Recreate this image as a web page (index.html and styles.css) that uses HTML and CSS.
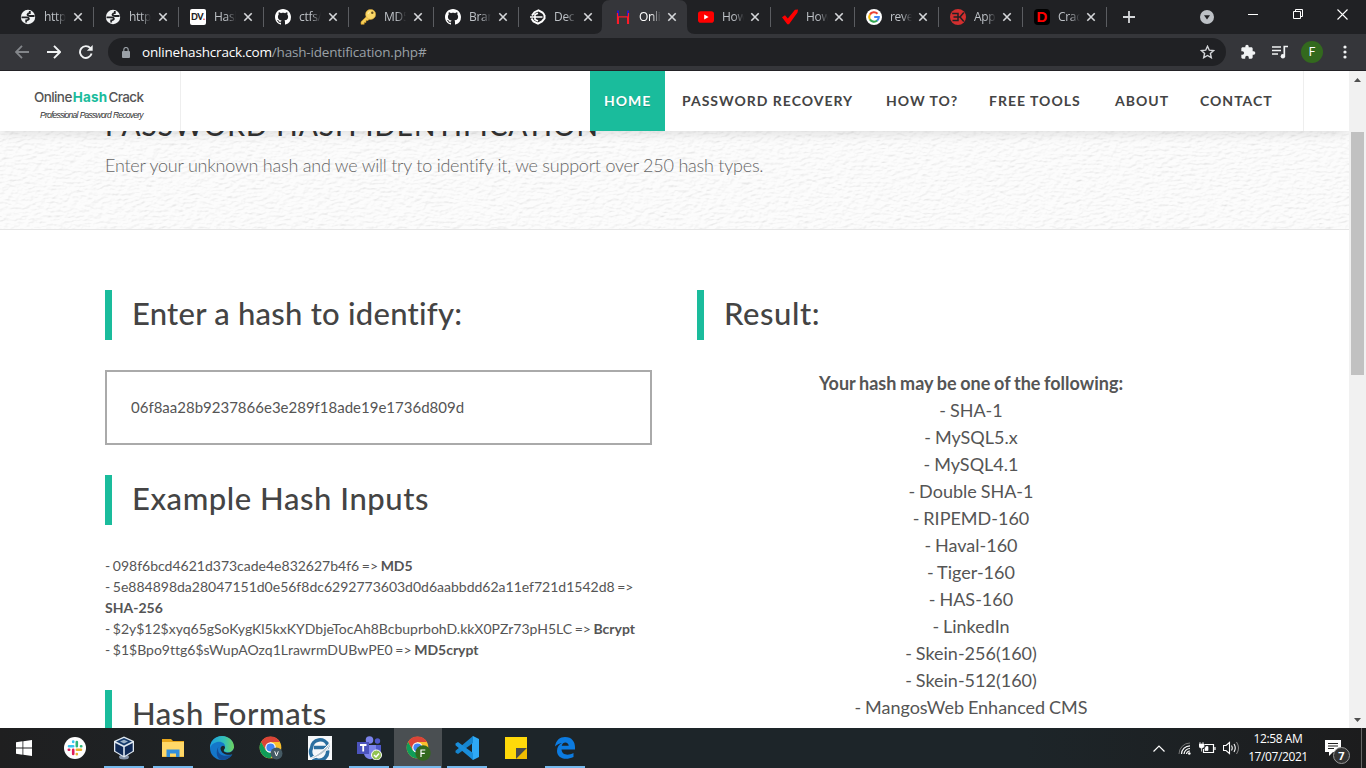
FILE: index.html
```html
<!DOCTYPE html>
<html lang="en">
<head>
<meta charset="utf-8">
<title>Online Hash Crack</title>
<link rel="stylesheet" href="styles.css">
</head>
<body>
<svg class="defs" width="0" height="0" aria-hidden="true">
  <symbol id="x" viewBox="0 0 10 10"><path d="M1.3 1.3l7.4 7.4M8.7 1.3L1.3 8.7" stroke="currentColor" stroke-width="1.6" fill="none"/></symbol>
  <symbol id="globe" viewBox="0 0 16 16"><circle cx="8" cy="8" r="7.2" fill="#f1f3f4"/><path d="M1.500 8.300H6.500Q9.300 8.500 8.800 10.200 8 11.300 6.200 11.300V13.500M14.500 7H10.500Q7.500 6.800 7.500 5.500 8 4.300 9.800 4.200V2" fill="none" stroke="#202124" stroke-width="1.8"/></symbol>
  <symbol id="github" viewBox="0 0 16 16"><path fill="#fff" d="M8 0C3.58 0 0 3.58 0 8c0 3.54 2.29 6.53 5.47 7.59.4.07.55-.17.55-.38 0-.19-.01-.82-.01-1.49-2.01.37-2.53-.49-2.69-.94-.09-.23-.48-.94-.82-1.13-.28-.15-.68-.52-.01-.53.63-.01 1.08.58 1.23.82.72 1.21 1.87.87 2.33.66.07-.52.28-.87.51-1.07-1.78-.2-3.64-.89-3.64-3.95 0-.87.31-1.59.82-2.15-.08-.2-.36-1.02.08-2.12 0 0 .67-.21 2.2.82.64-.18 1.32-.27 2-.27s1.36.09 2 .27c1.53-1.04 2.2-.82 2.2-.82.44 1.1.16 1.92.08 2.12.51.56.82 1.27.82 2.15 0 3.07-1.87 3.75-3.65 3.95.29.25.54.73.54 1.48 0 1.07-.01 1.93-.01 2.2 0 .21.15.46.55.38A8.01 8.01 0 0016 8c0-4.42-3.58-8-8-8z"/></symbol>
  <symbol id="chrome" viewBox="0 0 24 24"><circle cx="12" cy="12" r="11.3" fill="#fbc02d"/><path d="M2.2 6.3A11.3 11.3 0 0121.8 6.3H12L7 14.8z" fill="#db4437"/><path d="M2.2 6.3L7 14.8 12 17.500 15 16.500 12 23.3A11.3 11.3 0 012.2 6.3z" fill="#0f9d58"/><circle cx="12" cy="12" r="5.5" fill="#fff"/><circle cx="12" cy="12" r="4.3" fill="#4285f4"/></symbol>
</svg>

<div class="tabs">
  <div class="tab"><svg class="fav"><use href="#globe"/></svg><span>http</span><svg class="close"><use href="#x"/></svg></div>
  <div class="tab"><svg class="fav"><use href="#globe"/></svg><span>http</span><svg class="close"><use href="#x"/></svg></div>
  <div class="tab"><div class="fav dv">DV<i>.</i></div><span>Hasl</span><svg class="close"><use href="#x"/></svg></div>
  <div class="tab"><svg class="fav"><use href="#github"/></svg><span>ctfs/</span><svg class="close"><use href="#x"/></svg></div>
  <div class="tab"><svg class="fav" viewBox="0 0 16 16"><path d="M7.500 6.500L1 12.800V15.300H4.200V13.500H6V11.500H8L10 9.500z" fill="#f7cf57" stroke="#d39a26" stroke-width=".6"/><circle cx="10.600" cy="5.400" r="5" fill="#fbd868" stroke="#d9a636" stroke-width=".6"/><circle cx="12.300" cy="3.700" r="1.200" fill="#6b5320"/><path d="M8 5Q8.500 3 10 2.800" fill="none" stroke="#fff3c0"/></svg><span>MD5</span><svg class="close"><use href="#x"/></svg></div>
  <div class="tab"><svg class="fav"><use href="#github"/></svg><span>Bran</span><svg class="close"><use href="#x"/></svg></div>
  <div class="tab last-before"><svg class="fav" viewBox="0 0 16 16"><path d="M14.500 6L12.500 3.500 8.500 1.300 4.500 3.200 2 6.500" fill="none" stroke="#fff" stroke-width="2"/><path d="M1.500 9.500L3.500 12.500 8 14.700 12 12.500 14.500 9.500V6" fill="none" stroke="#fff" stroke-width="2"/><path d="M0 8H12.500M5 8V5.500L8 4.200M5 8V10.500L8 12" fill="none" stroke="#fff" stroke-width="1.600"/></svg><span>Dec</span><svg class="close"><use href="#x"/></svg></div>
  <div class="tab active"><svg class="fav" viewBox="0 0 16 16"><path d="M3 1.500V10M13 1.500V10" stroke="#2a14c8" stroke-width="2"/><path d="M3 8V15M13 8V15" stroke="#ff1a28" stroke-width="2"/><path d="M2.500 4V15M13.500 4V15M2.500 7.800H13.500" stroke="#ff1a28" stroke-width="1.200"/></svg><span>Onlin</span><svg class="close"><use href="#x"/></svg></div>
  <div class="tab narrow"><svg class="fav" viewBox="0 0 16 16"><rect y="2.3" width="16" height="11.4" rx="2.8" fill="#f00"/><path d="M6.2 5.5V10.5L10.6 8z" fill="#fff"/></svg><span>How</span><svg class="close"><use href="#x"/></svg></div>
  <div class="tab narrow"><svg class="fav" viewBox="0 0 16 16"><path d="M0 8.2L3 6.2 5.8 9.4 13 .8 16 .5 15.5 3.5 7 15.3H5.3z" fill="#f00"/></svg><span>How</span><svg class="close"><use href="#x"/></svg></div>
  <div class="tab narrow"><svg class="fav" viewBox="0 0 16 16"><circle cx="8" cy="8" r="8" fill="#fff"/><g fill="none" stroke-width="2.1"><path d="M11.5 4.8A4.8 4.8 0 003.9 5.6" stroke="#ea4335"/><path d="M3.9 5.5A4.8 4.8 0 003.9 10.5" stroke="#fbbc05"/><path d="M3.9 10.4A4.8 4.8 0 0011.2 11.5" stroke="#34a853"/><path d="M11.1 11.6A4.6 4.6 0 0012.8 8H8.2" stroke="#4285f4"/></g></svg><span>reve</span><svg class="close"><use href="#x"/></svg></div>
  <div class="tab narrow"><svg class="fav" viewBox="0 0 16 16"><circle cx="8" cy="8" r="8" fill="#d32f2f"/><path d="M2.2 4.5H8V11.5H2.5M3.5 8H8M8 8H10L13.8 3.5M10 8L13.8 12.5" fill="none" stroke="#202124" stroke-width="1.5"/></svg><span>App</span><svg class="close"><use href="#x"/></svg></div>
  <div class="tab narrow"><div class="fav dd">D</div><span>Crac</span><svg class="close"><use href="#x"/></svg></div>
  <svg class="plus" viewBox="0 0 12 12"><path d="M6 0V12M0 6H12" stroke="#d5d7da" stroke-width="1.8"/></svg>
  <div class="window-tools">
    <svg width="14" height="14" viewBox="0 0 14 14"><circle cx="7" cy="7" r="7" fill="#bdc1c6"/><path d="M4 5.2H10L7 9.4z" fill="#202124"/></svg>
    <svg width="10" height="10" viewBox="0 0 10 10"><path d="M0 5.5H10" stroke="#fff"/></svg>
    <svg width="10" height="10" viewBox="0 0 10 10"><path d="M.5 2.5H7.5V9.5H.5zM2.5 2.5V.5H9.5V7.5H7.5" fill="none" stroke="#fff"/></svg>
    <svg width="11" height="11" viewBox="0 0 11 11"><path d="M.5 .5l10 10M10.5 .5l-10 10" stroke="#fff" stroke-width="1.1"/></svg>
  </div>
</div>

<div class="toolbar">
  <svg class="nav-ico" viewBox="0 0 14 14"><path d="M14 7H1M7 .8L.9 7 7 13.2" fill="none" stroke="#83868a" stroke-width="1.8"/></svg>
  <svg class="nav-ico" viewBox="0 0 14 14"><path d="M0 7H13M7 .8L13.1 7 7 13.2" fill="none" stroke="#f1f3f4" stroke-width="1.9"/></svg>
  <svg class="nav-ico" viewBox="0 0 14 14"><path d="M12.6 8.6A5.9 5.9 0 1111.4 3.2" fill="none" stroke="#f1f3f4" stroke-width="1.9"/><path d="M13.7 0V5.8H7.9z" fill="#f1f3f4"/></svg>
  <div class="omnibox">
    <svg width="8" height="11" viewBox="0 0 8 11"><rect y="4" width="8" height="7" rx="1" fill="#9aa0a6"/><path d="M1.8 4.5V2.7A2.2 2.2 0 016.2 2.7V4.5" fill="none" stroke="#9aa0a6" stroke-width="1.2"/></svg>
    <div class="url">onlinehashcrack.com<span>/hash-identification.php#</span></div>
    <svg class="star" width="15" height="14" viewBox="0 0 15 14"><path d="M7.5 1.3L9.3 5.2 13.6 5.6 10.4 8.5 11.3 12.7 7.5 10.5 3.7 12.7 4.6 8.5 1.4 5.6 5.7 5.2z" fill="none" stroke="#d5d7da" stroke-width="1.4"/></svg>
  </div>
  <svg class="ext" width="16" height="16" viewBox="0 0 24 24"><path fill="#f1f3f4" d="M20.5 11H19V7c0-1.1-.9-2-2-2h-4V3.500a2.500 2.500 0 00-5 0V5H4c-1.100 0-2 .9-2 2v3.800h1.500a2.700 2.700 0 010 5.400H2V20c0 1.100.9 2 2 2h3.800v-1.500a2.700 2.700 0 015.400 0V22H17c1.100 0 2-.9 2-2v-4h1.500a2.500 2.500 0 000-5z"/></svg>
  <svg class="music" width="16" height="14" viewBox="0 0 16 14"><path d="M0 2H9M0 5.500H9M0 9H6" stroke="#f1f3f4" stroke-width="1.500"/><path d="M12.300 11V1.500H16" fill="none" stroke="#f1f3f4" stroke-width="1.700"/><circle cx="10.900" cy="11.200" r="2.200" fill="#f1f3f4"/></svg>
  <div class="avatar">F</div>
  <svg class="dots" width="4" height="14" viewBox="0 0 4 14"><g fill="#f1f3f4"><circle cx="2" cy="2" r="1.600"/><circle cx="2" cy="7" r="1.600"/><circle cx="2" cy="12" r="1.600"/></g></svg>
</div>

<div class="viewport">
  <main class="page">
    <header class="site-header">
      <div class="logo"><b>Online<em>Hash</em>Crack</b><i>Professional Password Recovery</i></div>
      <nav>
        <a class="on">HOME</a>
        <a>PASSWORD RECOVERY</a>
        <a>HOW TO?</a>
        <a>FREE TOOLS</a>
        <a>ABOUT</a>
        <a>CONTACT</a>
      </nav>
    </header>
    <section class="banner">
      <svg class="texture" width="1349" height="158"><filter id="plaster" x="0" y="0" width="100%" height="100%"><feTurbulence type="fractalNoise" baseFrequency=".16 .36" numOctaves="5" seed="8"/><feDiffuseLighting surfaceScale="1.1" lighting-color="#fff" diffuseConstant="1.11"><feDistantLight azimuth="235" elevation="62"/></feDiffuseLighting></filter><rect width="1349" height="158" filter="url(#plaster)"/></svg>
      <div class="banner-text">
        <h1>PASSWORD HASH IDENTIFICATION</h1>
        <p>Enter your unknown hash and we will try to identify it, we support over 250 hash types.</p>
      </div>
    </section>
    <section class="columns">
      <div>
        <h2 class="enter">Enter a hash to identify:</h2>
        <div class="field">06f8aa28b9237866e3e289f18ade19e1736d809d</div>
        <h2>Example Hash Inputs</h2>
        <p class="examples">- 098f6bcd4621d373cade4e832627b4f6 =&gt; <b>MD5</b><br>- 5e884898da28047151d0e56f8dc6292773603d0d6aabbdd62a11ef721d1542d8 =&gt; <b>SHA-256</b><br>- $2y$12$xyq65gSoKygKl5kxKYDbjeTocAh8BcbuprbohD.kkX0PZr73pH5LC =&gt; <b>Bcrypt</b><br>- $1$Bpo9ttg6$sWupAOzq1LrawrmDUBwPE0 =&gt; <b>MD5crypt</b></p>
        <h2>Hash Formats</h2>
      </div>
      <div>
        <h2>Result:</h2>
        <p class="result"><b>Your hash may be one of the following:</b><br>- SHA-1<br>- MySQL5.x<br>- MySQL4.1<br>- Double SHA-1<br>- RIPEMD-160<br>- Haval-160<br>- Tiger-160<br>- HAS-160<br>- LinkedIn<br>- Skein-256(160)<br>- Skein-512(160)<br>- MangosWeb Enhanced CMS</p>
      </div>
    </section>
  </main>
  <div class="scroll">
    <svg width="7" height="4" viewBox="0 0 7 4"><path d="M0 4L3.500 0 7 4z" fill="#505050"/></svg>
    <div class="thumb"></div>
    <svg width="7" height="4" viewBox="0 0 7 4"><path d="M0 0L3.500 4 7 0z" fill="#505050"/></svg>
  </div>
</div>

<div class="taskbar">
  <div class="slot start"><svg width="16" height="16" viewBox="0 0 16 16"><path d="M0 2.200L6.500 1.300V7.600H0zM7.300 1.200L16 0V7.600H7.300zM0 8.400H6.500V14.700L0 13.800zM7.300 8.400H16V16L7.300 14.800z" fill="#fff"/></svg></div>
  <div class="slot"><svg width="22" height="22" viewBox="0 0 22 22"><circle cx="11" cy="11" r="11" fill="#fff"/><g stroke-width="2.600" stroke-linecap="round"><path d="M9.200 4.500V5M5 9.200H9.200" stroke="#36c5f0"/><path d="M12.800 5V9.200M17 9.200H17.300" stroke="#2eb67d"/><path d="M12.800 12.800H17M12.800 17V17.300" stroke="#ecb22e"/><path d="M9.200 12.800V17M4.800 12.800H5.200" stroke="#e01e5a"/></g></svg></div>
  <div class="slot run"><svg width="24" height="24" viewBox="0 0 24 24"><ellipse cx="12" cy="21" rx="5" ry="2.500" fill="#8593a8"/><path d="M12 .5L22 5V15.500L12 21.500 2 15.500V5z" fill="#dfe8f0"/><path d="M12 2L20 5.500 12 9.500 4 5.500z" fill="#153a6b"/><path d="M3.300 7L11.200 11V19.800L3.300 15zM20.700 7L12.800 11V19.800L20.700 15z" fill="#102a56"/><path d="M8 5.500L12 3.800 16 5.500 12 7.500z" fill="#9cb2c8"/></svg></div>
  <div class="slot run"><svg width="22" height="18" viewBox="0 0 22 18"><path d="M0 0H9L11 2H22V18H0z" fill="#e8a71c"/><path d="M0 3H22V17.500H0z" fill="#ffd868"/><path d="M4.500 18V10.500H17.500V18H14V14.500H8V18z" fill="#338fdb"/></svg></div>
  <div class="slot"><svg width="24" height="24" viewBox="0 0 24 24"><defs><linearGradient id="edgeTop"><stop stop-color="#1aa0e2"/><stop offset=".6" stop-color="#35c1b5"/><stop offset="1" stop-color="#71d35b"/></linearGradient></defs><circle cx="12" cy="12" r="12" fill="#1477c9"/><path d="M0 12C0 5 5 0 12 0S24 5 24 11C24 15 20 17 16 16 13 15.500 13.500 14 15 12 16 7 11 5 7 6 3 7 1 9 0 12z" fill="url(#edgeTop)"/><path d="M8 13C8 19 13 21 22 19 19 23 15 24 11 24 6 22 5 14 10 8.500 8.500 10 8 11.500 8 13z" fill="#124e99"/><path d="M15 12C13.500 14 13 15.500 16 16.500 19 17.500 23 16 24 12V17.500C20 20 11 19 10.500 12.500 11 9 15 9 15 12z" fill="#1d2529"/></svg></div>
  <div class="slot"><svg width="24" height="24" viewBox="0 0 24 24"><use href="#chrome" width="23" height="23"/><circle cx="17.500" cy="17.500" r="6" fill="#455a64"/><path d="M15.700 15.300L17.500 20 19.300 15.300" fill="none" stroke="#fff"/></svg></div>
  <div class="slot"><svg width="24" height="24" viewBox="0 0 24 24"><path d="M0 0H24V24H0z" fill="#f6f8fa"/><path d="M19.500 14.500A8.500 8.500 0 113.500 12 8.500 8.500 0 0120 9.500L19 11.500H6" fill="none" stroke="#2a6fa0" stroke-width="3.600"/><path d="M1 23C8 19 17 14 23 5 20 15 14 20 3 23z" fill="#b9c7d1" stroke="#fff"/></svg></div>
  <div class="slot run"><svg width="26" height="24" viewBox="0 0 26 24"><circle cx="13.500" cy="4" r="3.800" fill="#7b83eb"/><circle cx="21.500" cy="5" r="2.700" fill="#5059c9"/><path d="M16 9H25V17Q24 21 19 20z" fill="#5059c9"/><path d="M8 9H20V18Q18 24 13 23 9 22 8 18z" fill="#7b83eb"/><path d="M1 6H13V18H1z" fill="#4b53bc"/><path d="M4 9H10.500M7.200 9V15.500" stroke="#fff" stroke-width="1.800"/><circle cx="20.500" cy="19" r="5" fill="#92c353" stroke="#fff"/><path d="M18 19L20 21 23 17.500" fill="none" stroke="#fff" stroke-width="1.500"/></svg></div>
  <div class="slot run current"><svg width="26" height="26" viewBox="0 0 26 26"><use href="#chrome" x="1" y="1" width="23" height="23"/><circle cx="18" cy="18" r="7.700" fill="#33691e"/><path d="M16 22V15H20.300M16 18.300H19.800" fill="none" stroke="#fff" stroke-width="1.200"/></svg></div>
  <div class="slot run"><svg width="24" height="24" viewBox="0 0 24 24"><path d="M18 0L24 3V21L18 24 17 22V2z" fill="#2fa9f5"/><path d="M18 0V7L3 18 .5 16.500V14.800z" fill="#1585cf"/><path d="M18 24V17L3 6 .5 7.500V9.200z" fill="#1a8edb"/></svg></div>
  <div class="slot"><svg width="22" height="22" viewBox="0 0 22 22"><path d="M0 0H22V11L11 22H0z" fill="#ffd90a"/><path d="M11 11H22L11 22z" fill="#484a4c"/><path d="M11 22L22 11V22z" fill="#f1bd00"/></svg></div>
  <div class="slot run"><svg width="22" height="22" viewBox="0 0 22 22"><path d="M1 9.500C2 3 6 0 11 0 18 0 21 5 21 10V12.500H7.500C8 18 14 19 19.500 16V20C11 24 3 21 3 14 3 10 5 7.500 8 6 5 6.500 3 7.500 1 9.500zM7.700 8.800H14.700C14.700 4.500 8.500 4 7.700 8.800z" fill="#0c7be0"/></svg></div>
  <div class="tray">
    <svg width="12" height="7" viewBox="0 0 12 7"><path d="M.5 6.500L6 1 11.500 6.500" fill="none" stroke="#fff" stroke-width="1.200"/></svg>
    <svg class="wifi" width="13" height="13" viewBox="0 0 13 13"><g fill="none"><path d="M1 12A11 11 0 0112 1" stroke="#777"/><path d="M3.500 12A8.500 8.500 0 0112 3.800M6 12A6 6 0 0112 6.500M8.500 12A3.500 3.500 0 0112 9" stroke="#fff" stroke-width="1.200"/></g><circle cx="11.300" cy="11.500" r="1.300" fill="#fff"/></svg>
    <svg class="bat" width="17" height="12" viewBox="0 0 17 12"><path d="M5.500 2.500H14.500V10.500H4.500V7M16 5V8" fill="none" stroke="#fff" stroke-width="1.200"/><path d="M7 4.500H9V8.500H6V6zM0 2H5V4.500Q4.500 6 2.500 6 .5 6 0 4.500zM1 0V2M4 0V2M2.500 6V9.500" fill="#fff" stroke="#fff" stroke-width=".7"/></svg>
    <svg class="vol" width="17" height="14" viewBox="0 0 17 14"><path d="M.5 4.500H3L6.500 1.500V12.500L3 9.500H.5zM8.500 4.500Q10 7 8.500 9.500M11 3Q13.500 7 11 11" fill="none" stroke="#fff" stroke-width="1.100"/><path d="M13.500 1Q17.500 7 13.500 13" fill="none" stroke="#888"/></svg>
    <div class="clock"><span>12:58 AM</span><span>17/07/2021</span></div>
    <div class="notes"><svg width="16" height="16" viewBox="0 0 16 16"><path d="M0 0H16V12H8L4 16V12H0z" fill="#fff"/><path d="M3 3.500H13M3 6H13M3 8.500H9" stroke="#222"/></svg><b>7</b></div>
  </div>
</div>
</body>
</html>
```
FILE: styles.css
```css
* { box-sizing: border-box; }
body { margin: 0; width: 1366px; height: 768px; overflow: hidden; display: flex; flex-direction: column; font-family: Lato, sans-serif; font-variant-ligatures: none; color: #444; background: #fff; }
svg { display: block; flex: none; }
.defs { position: absolute; }

.tabs { flex: none; height: 34px; background: #202124; display: flex; align-items: center; padding-left: 9px; font-family: "Open Sans", sans-serif; }
.tab { width: 85px; height: 34px; flex: none; display: flex; align-items: center; padding-left: 11px; position: relative; color: #bdc1c6; }
.tab.narrow { width: 84px; }
.tab.active { width: 83px; color: #fff; }
.tab::after { content: ""; position: absolute; right: 0; top: 7px; width: 1px; height: 20px; background: #5b5d61; }
.tab.last-before::after { display: none; }
.tab.active::after { right: auto; left: -10px; top: 0; width: 101px; height: 34px; background: #35363a; clip-path: path("M0 34Q8 34 8 26V8Q8 0 16 0H85Q93 0 93 8V26Q93 34 101 34Z"); }
.tab > * { z-index: 1; }
.fav { width: 16px; height: 16px; flex: none; }
.dv { background: #fff; border-radius: 2px; color: #222; font: 900 9px/16px Lato, sans-serif; letter-spacing: -.4px; text-align: center; }
.dv i { color: #e33; }
.dd { background: #000; border-radius: 4px; color: #f00; font: 900 15px/16px "Liberation Sans", sans-serif; text-align: center; }
.tab span { width: 22px; margin-left: 8px; overflow: hidden; font-size: 12px; line-height: 18px; letter-spacing: -.3px; white-space: nowrap; -webkit-mask-image: linear-gradient(90deg, #000 55%, transparent); mask-image: linear-gradient(90deg, #000 55%, transparent); }
.close { width: 10px; height: 10px; margin-left: 7px; color: #d5d7da; }
.narrow .close, .active .close { margin-left: 6px; }
.plus { width: 12px; height: 12px; margin-left: 16px; }
.window-tools { margin-left: auto; align-self: flex-start; width: 166px; height: 28px; padding-right: 18px; display: flex; align-items: center; justify-content: space-between; }
.window-tools svg:first-child { margin-top: 6px; }

.toolbar { flex: none; height: 37px; background: #35363a; border-bottom: 1px solid #232226; display: flex; align-items: center; padding-left: 15px; }
.nav-ico { width: 14px; height: 14px; margin-right: 18px; }
.omnibox { width: 1118px; height: 28px; border-radius: 14px; background: #202124; margin-left: -3px; padding: 0 11px 0 14px; display: flex; align-items: center; font-family: "Open Sans", sans-serif; }
.url { margin-left: 12px; font-size: 13.5px; color: #fff; letter-spacing: -.18px; white-space: nowrap; }
.url span { color: #9aa0a6; }
.star { margin-left: auto; }
.ext { margin-left: 14px; }
.music { margin-left: 16px; }
.avatar { width: 22px; height: 22px; margin-left: 13px; border-radius: 50%; background: #33691e; color: #fff; font: 12px/22px Roboto, sans-serif; text-align: center; }
.dots { margin-left: 20px; }

.viewport { height: 657px; flex: none; display: flex; }
.page { width: 1349px; overflow: hidden; }
.site-header { height: 60px; display: flex; position: relative; z-index: 2; background: #fff; box-shadow: 0 1px 12px rgba(0,0,0,.15); }
.logo { width: 181px; border-right: 1px solid #eee; padding: 17px 0 0 34px; display: flex; flex-direction: column; white-space: nowrap; }
.logo b { font: 500 13.5px/18px Inter, sans-serif; letter-spacing: -.6px; color: #555; }
.logo em { font-style: normal; font-weight: 700; color: #1abc9c; margin: 0 1px; letter-spacing: .2px; }
.logo i { font: italic 8.5px/11px "Liberation Sans", sans-serif; margin: 4px 0 0 6px; color: #333; letter-spacing: -.76px; word-spacing: .4px; }
nav { width: 714px; margin-left: 409px; border-right: 1px solid #eee; display: grid; grid-template-columns: 77px 204px 103px 126px 85px 100px; }
nav a { font-size: 14px; font-weight: 700; line-height: 60px; letter-spacing: 1px; padding-left: 15px; white-space: nowrap; }
nav .on { background: #1abc9c; color: #fff; margin-right: 2px; padding-left: 14px; text-shadow: 0 1px 1px rgba(0,0,0,.2); }
.banner { height: 99px; position: relative; border-bottom: 1px solid #e6e6e6; background: #fafafa; overflow: hidden; }
.texture { position: absolute; inset: 0; opacity: .42; }
.banner-text { position: relative; margin: -26px 0 0 105px; }
h1 { margin: 0; font-size: 28px; font-weight: 500; line-height: 40px; letter-spacing: 1px; color: #333; }
.banner p { margin: 6px 0 0; font-size: 18px; font-weight: 300; line-height: 28px; letter-spacing: -.23px; color: #666; }
.columns { display: grid; grid-template-columns: 547px 548px; gap: 45px; padding: 60px 0 0 105px; }
h2 { margin: 0; height: 50px; border-left: 7px solid #1abc9c; padding-left: 20px; font-size: 31px; font-weight: 500; line-height: 46px; letter-spacing: .55px; }
h2.enter { letter-spacing: .25px; }
.field { height: 75px; margin: 30px 0; border: 2px solid #aaa; padding-left: 24px; font-size: 15px; line-height: 71px; color: #555; }
.examples { margin: 30px 0; font-size: 14px; line-height: 21px; word-spacing: -1px; color: #555; }
.result { margin: 30px 0; font-size: 18px; line-height: 27px; word-spacing: -.7px; text-align: center; color: #555; }
.scroll { width: 17px; background: #f1f1f1; display: flex; flex-direction: column; align-items: center; padding: 7px 0 6px; }
.thumb { width: 13px; height: 243px; margin: 50px 0 auto; background: #c1c1c1; }

.taskbar { height: 40px; flex: none; background: linear-gradient(90deg, #1f1f20, #1d2529 25%, #1d2529 75%, #1c1c1d); display: flex; }
.slot { width: 49px; display: flex; align-items: center; justify-content: center; position: relative; }
.start { width: 50px; padding-right: 2px; }
.current { background: linear-gradient(#4a4f52, #4a4f52) center / 48px 100% no-repeat; }
.run::after { content: ""; position: absolute; left: 5px; right: 4px; bottom: 0; height: 2px; background: #76b9ed; }
.current::after { left: 0; right: 1px; }
.tray { margin-left: auto; display: flex; align-items: center; padding-right: 4px; color: #fff; }
.wifi { margin-left: 13px; }
.bat { margin-left: 8px; }
.vol { margin-left: 7px; }
.clock { width: 64px; margin-left: 6px; display: flex; flex-direction: column; align-items: center; font: 12px/18px "Open Sans", sans-serif; letter-spacing: -.4px; }
.notes { width: 37px; margin-left: 15px; height: 40px; border-right: 1px solid #666; position: relative; display: flex; align-items: center; }
.notes b { position: absolute; left: 8px; top: 19px; width: 17px; height: 17px; border: 1px solid #999; border-radius: 50%; background: #333; font: 700 11px/15px "Open Sans", sans-serif; text-align: center; }
```
